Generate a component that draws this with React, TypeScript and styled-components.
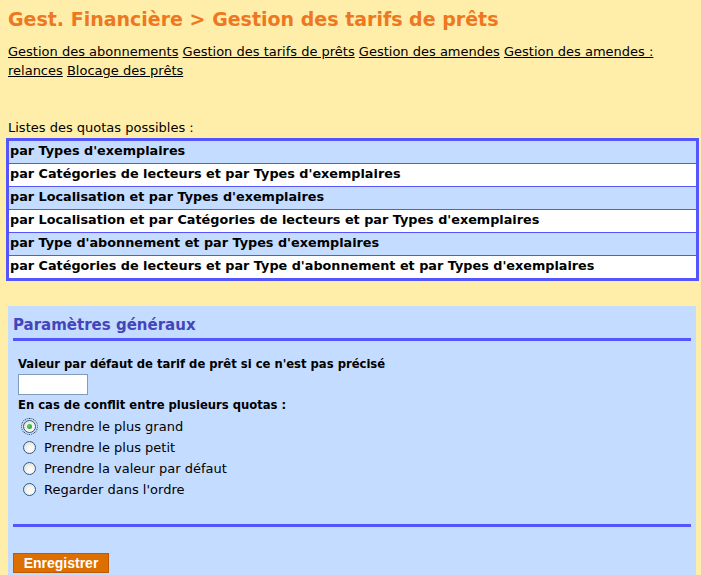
import React from "react";
import styled, { createGlobalStyle } from "styled-components";

const GlobalStyle = createGlobalStyle`
  html, body {
    margin: 0;
    padding: 0;
    background: #ffeeaa;
  }
  body {
    font-family: "DejaVu Sans", Verdana, sans-serif;
    color: #000;
  }
`;

const Page = styled.div`
  display: flex;
  flex-direction: column;
  padding-bottom: 20px;
`;

const Title = styled.h1`
  margin: 7px 8px 0 8px;
  font-size: 19px;
  line-height: 24px;
  font-weight: bold;
  color: #ee7722;
`;

const Nav = styled.nav`
  margin: 11px 8px 0 8px;
  font-size: 13px;
  line-height: 19px;
`;

const NavLink = styled.a`
  color: #000;
  text-decoration: underline;
  cursor: pointer;
`;

const Caption = styled.div`
  margin: 40px 8px 0 8px;
  font-size: 13px;
  line-height: 16px;
`;

const QuotaList = styled.div`
  margin: 2px 2px 0 6px;
  border: 3px solid #5555ff;
  display: flex;
  flex-direction: column;
`;

const QuotaRow = styled.div<{ $alt: boolean }>`
  height: 22px;
  box-sizing: border-box;
  padding: 2px 1px 0 1px;
  font-size: 12.8px;
  line-height: 16px;
  font-weight: bold;
  background: ${(p) => (p.$alt ? "#ffffff" : "#c4dcff")};
  & + & {
    border-top: 1px solid #5555ff;
    height: 23px;
  }
`;

const Panel = styled.section`
  margin: 25px 5px 0 8px;
  background: #c4dcff;
  padding: 10px 5px 30px 5px;
  display: flex;
  flex-direction: column;
`;

const PanelTitle = styled.h2`
  margin: 0;
  padding-bottom: 4px;
  border-bottom: 3px solid #5555ff;
  font-size: 15px;
  line-height: 18px;
  font-weight: bold;
  color: #4444bb;
`;

const FieldLabel = styled.div<{ $top: number }>`
  margin: ${(p) => p.$top}px 0 0 5px;
  font-size: 11.6px;
  line-height: 15px;
  font-weight: bold;
`;

const TextInput = styled.input`
  margin: 2px 0 0 5px;
  width: 70px;
  height: 21px;
  box-sizing: border-box;
  border: 1px solid #7f9db9;
  background: #fff;
  padding: 0 2px;
  font-size: 12px;
  font-family: inherit;
`;

const RadioGroup = styled.div`
  margin: 3px 0 0 10px;
  display: flex;
  flex-direction: column;
`;

const RadioRow = styled.label`
  display: flex;
  align-items: center;
  height: 21px;
  font-size: 13px;
  line-height: 21px;
  gap: 8px;
`;

const Radio = styled.input`
  appearance: none;
  -webkit-appearance: none;
  margin: 0;
  width: 13px;
  height: 13px;
  box-sizing: border-box;
  border-radius: 50%;
  border: 1px solid #2f5d87;
  background: radial-gradient(circle at 60% 65%, #ffffff 0%, #f4f4f0 40%, #d8d8d0 100%);
  position: relative;
  &:checked::after {
    content: "";
    position: absolute;
    left: 3px;
    top: 3px;
    width: 5px;
    height: 5px;
    border-radius: 50%;
    background: radial-gradient(circle at 40% 40%, #5fd35f, #1f8f2f);
  }
  &:checked {
    outline: 1px dotted #333;
    outline-offset: 1px;
  }
`;

const Separator = styled.hr`
  margin: 24px 0 0 0;
  border: 0;
  height: 3px;
  background: #5555ff;
`;

const SaveButton = styled.button`
  align-self: flex-start;
  margin-top: 26px;
  width: 96px;
  height: 20px;
  padding: 0;
  border: 1px solid #c05a00;
  background: #dd6e00;
  color: #fff;
  font-family: "Liberation Sans", Arial, sans-serif;
  font-weight: bold;
  font-size: 14px;
  line-height: 18px;
  cursor: pointer;
`;

const links = [
  "Gestion des abonnements",
  "Gestion des tarifs de prêts",
  "Gestion des amendes",
  "Gestion des amendes : relances",
  "Blocage des prêts",
];

const quotas = [
  "par Types d'exemplaires",
  "par Catégories de lecteurs et par Types d'exemplaires",
  "par Localisation et par Types d'exemplaires",
  "par Localisation et par Catégories de lecteurs et par Types d'exemplaires",
  "par Type d'abonnement et par Types d'exemplaires",
  "par Catégories de lecteurs et par Type d'abonnement et par Types d'exemplaires",
];

const options = [
  "Prendre le plus grand",
  "Prendre le plus petit",
  "Prendre la valeur par défaut",
  "Regarder dans l'ordre",
];

export default function App() {
  return (
    <Page>
      <GlobalStyle />
      <Title>Gest. Financière &gt; Gestion des tarifs de prêts</Title>
      <Nav>
        {links.map((l, i) => (
          <React.Fragment key={l}>
            <NavLink>{l}</NavLink>
            {i < links.length - 1 ? " " : null}
          </React.Fragment>
        ))}
      </Nav>
      <Caption>Listes des quotas possibles :</Caption>
      <QuotaList>
        {quotas.map((q, i) => (
          <QuotaRow key={q} $alt={i % 2 === 1}>
            {q}
          </QuotaRow>
        ))}
      </QuotaList>
      <Panel>
        <PanelTitle>Paramètres généraux</PanelTitle>
        <FieldLabel $top={16}>Valeur par défaut de tarif de prêt si ce n'est pas précisé</FieldLabel>
        <TextInput type="text" />
        <FieldLabel $top={3}>En cas de conflit entre plusieurs quotas :</FieldLabel>
        <RadioGroup>
          {options.map((o, i) => (
            <RadioRow key={o}>
              <Radio type="radio" name="conflit" defaultChecked={i === 0} />
              {o}
            </RadioRow>
          ))}
        </RadioGroup>
        <Separator />
        <SaveButton type="button">Enregistrer</SaveButton>
      </Panel>
    </Page>
  );
}
